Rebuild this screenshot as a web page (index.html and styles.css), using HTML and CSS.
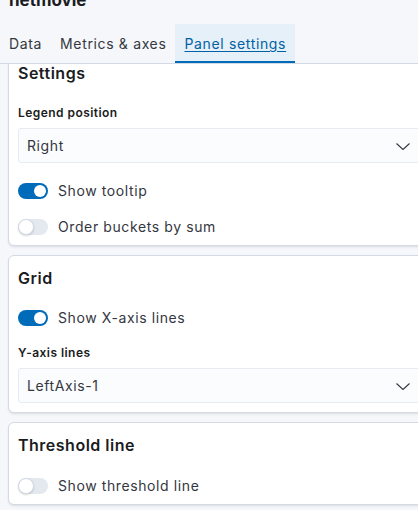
FILE: index.html
```html
<!DOCTYPE html>
<html lang="en">
<head>
<meta charset="utf-8">
<title>netmovie</title>
<link rel="stylesheet" href="styles.css">
</head>
<body>
<div class="app">
  <h1 class="title">netmovie</h1>
  <div class="tabs">
    <button class="tab">Data</button>
    <button class="tab">Metrics &amp; axes</button>
    <button class="tab tab-selected">Panel settings</button>
  </div>
  <div class="content">
    <section class="panel panel-first">
      <h2 class="panel-title">Settings</h2>
      <div class="field field-after-title">
        <label class="field-label">Legend position</label>
        <div class="select"><span>Right</span>
          <svg class="chevron" width="16" height="16" viewBox="0 0 16 16"><path d="M1.5 5.5 L8 11.5 L14.5 5.5" fill="none" stroke="#343741" stroke-width="1.1"/></svg>
        </div>
      </div>
      <div class="switch-row row-after-field">
        <span class="switch on"><span class="knob"></span></span>
        <span class="switch-label">Show tooltip</span>
      </div>
      <div class="switch-row row-after-row">
        <span class="switch off"><span class="knob"></span></span>
        <span class="switch-label">Order buckets by sum</span>
      </div>
    </section>

    <section class="panel">
      <h2 class="panel-title">Grid</h2>
      <div class="switch-row row-after-title">
        <span class="switch on"><span class="knob"></span></span>
        <span class="switch-label">Show X-axis lines</span>
      </div>
      <div class="field field-after-row">
        <label class="field-label">Y-axis lines</label>
        <div class="select"><span>LeftAxis-1</span>
          <svg class="chevron" width="16" height="16" viewBox="0 0 16 16"><path d="M1.5 5.5 L8 11.5 L14.5 5.5" fill="none" stroke="#343741" stroke-width="1.1"/></svg>
        </div>
      </div>
    </section>

    <section class="panel">
      <h2 class="panel-title">Threshold line</h2>
      <div class="switch-row row-after-title2">
        <span class="switch off"><span class="knob"></span></span>
        <span class="switch-label">Show threshold line</span>
      </div>
    </section>
  </div>
</div>
</body>
</html>
```

FILE: styles.css
```css
html, body {
  margin: 0;
  padding: 0;
  overflow: hidden;
  background: #f5f7fa;
}

body {
  font-family: Inter, "Noto Sans", sans-serif;
  color: #343741;
  width: 418px;
  height: 510px;
}

.app {
  width: 418px;
  height: 510px;
  overflow: hidden;
}

.title {
  margin: -11px 0 0 9px;
  font-size: 17px;
  line-height: 22px;
  font-weight: 700;
  color: #1a1c21;
}

.tabs {
  margin-top: 13px;
  display: flex;
  border-bottom: 1px solid #d3dae6;
  width: 418px;
}

.tab {
  font-family: inherit;
  font-size: 14px;
  line-height: 20px;
  letter-spacing: 0.65px;
  color: #343741;
  background: transparent;
  border: 0;
  border-bottom: 2px solid transparent;
  padding: 10px 9px 7px;
  margin: 0;
}

.tab-selected {
  background: #e6f0f8;
  border-bottom-color: #006bb8;
  color: #0061a6;
  text-decoration: underline;
  text-underline-offset: 2px;
}

.content {
  height: 446px;
  overflow: hidden;
  width: 418px;
}

.panel {
  width: 422px;
  margin: 9px 0 0 8px;
  box-sizing: border-box;
  background: #fff;
  border: 1px solid #d3dae6;
  border-radius: 6px;
  box-shadow: 0 1px 2px rgba(0, 0, 0, 0.06), 0 2px 3px rgba(0, 0, 0, 0.04);
  padding: 10px 9px 8px 9px;
}

.panel-first {
  margin-top: -14px;
}

.panel-title {
  margin: 0;
  font-size: 16px;
  line-height: 24px;
  font-weight: 600;
  letter-spacing: 0.5px;
  color: #1a1c21;
}

.field {
  display: flex;
  flex-direction: column;
}

.field-after-title { margin-top: 19px; }
.field-after-row { margin-top: 16px; padding-bottom: 1px; }

.field-label {
  font-size: 12px;
  line-height: 18px;
  font-weight: 600;
  letter-spacing: 0.45px;
  color: #1a1c21;
}

.select {
  margin-top: 6px;
  height: 35px;
  box-sizing: border-box;
  background: #fbfcfd;
  border: 1px solid #e6eaf1;
  border-radius: 3px;
  display: flex;
  align-items: center;
  justify-content: space-between;
  padding: 0 8px 0 8px;
  font-size: 14px;
  letter-spacing: 0.6px;
  color: #343741;
}

.chevron {
  flex: none;
}

.switch-row {
  display: flex;
  align-items: center;
  height: 20px;
  gap: 10px;
}

.row-after-field { margin-top: 18px; }
.row-after-row { margin-top: 16px; }
.row-after-title { margin-top: 18px; }
.row-after-title2 { margin-top: 19px; }

.switch {
  width: 30px;
  height: 16px;
  border-radius: 8px;
  box-sizing: border-box;
  display: flex;
  align-items: center;
  flex: none;
}

.switch.on {
  background: #006bb8;
  justify-content: flex-end;
  padding: 0 2px;
}

.switch.on .knob {
  width: 12px;
  height: 12px;
  border-radius: 50%;
  background: #fff;
}

.switch.off {
  background: #e4e8ef;
  justify-content: flex-start;
}

.switch.off .knob {
  width: 16px;
  height: 16px;
  box-sizing: border-box;
  border-radius: 50%;
  background: #fff;
  border: 1px solid #d3dae6;
  box-shadow: 0 1px 2px rgba(0, 0, 0, 0.15);
}

.switch-label {
  font-size: 14px;
  line-height: 20px;
  letter-spacing: 0.6px;
  color: #343741;
}
```
